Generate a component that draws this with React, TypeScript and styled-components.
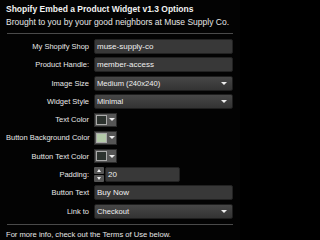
import React from "react";
import styled, { createGlobalStyle } from "styled-components";

const Global = createGlobalStyle`
  html, body { margin: 0; padding: 0; background: #000; }
  body { font-family: "Liberation Sans", Arial, sans-serif; }
`;

const Panel = styled.div`
  width: 240px;
  height: 240px;
  box-sizing: border-box;
  padding: 4px 7px 0 6px;
  background: #030303;
  color: #e4e4e4;
  font-size: 8.5px;
  overflow: hidden;
`;

const Title = styled.div`
  font-weight: bold;
  font-size: 8.5px;
  line-height: 11px;
  color: #f2f2f2;
`;

const Subtitle = styled.div`
  line-height: 11px;
  margin-top: 2px;
  color: #e6e6e6;
`;

const Divider = styled.div<{ $m: string }>`
  height: 0;
  border-top: 1px solid #4a4a4a;
  margin: ${(p) => p.$m};
  margin-left: 1px;
`;

const Form = styled.div`
  display: grid;
  grid-template-columns: 83px 1fr;
  column-gap: 5px;
  row-gap: 3.3px;
  align-items: center;
`;

const Label = styled.div`
  text-align: right;
  color: #e8e8e8;
  font-size: 7.5px;
  line-height: 15px;
  white-space: nowrap;
`;

const Field = styled.div<{ $w?: string }>`
  height: 15px;
  box-sizing: border-box;
  background: #383838;
  border: 1px solid #222;
  border-radius: 2px;
  padding: 0 2px;
  font-size: 8px;
  line-height: 13px;
  color: #f0f0f0;
  white-space: nowrap;
  overflow: hidden;
  width: ${(p) => p.$w || "auto"};
`;

const Select = styled.div`
  height: 15px;
  box-sizing: border-box;
  background: linear-gradient(#474747, #333);
  border: 1px solid #1e1e1e;
  border-radius: 2px;
  padding: 0 2px;
  display: flex;
  align-items: center;
  justify-content: space-between;
  font-size: 7.6px;
  color: #f0f0f0;
  white-space: nowrap;
`;

const Caret = styled.span<{ $mr?: number }>`
  width: 0;
  height: 0;
  border-left: 3px solid transparent;
  border-right: 3px solid transparent;
  border-top: 3px solid #eee;
  margin-right: ${(p) => (p.$mr ?? 3)}px;
`;

const ColorWrap = styled.div`
  display: flex;
  align-items: center;
  height: 14px;
  width: 23px;
  background: #555;
  border: 1px solid #2a2a2a;
  box-sizing: border-box;
`;

const Swatch = styled.div<{ $c: string }>`
  width: 11px;
  height: 10px;
  margin-left: 1px;
  box-sizing: border-box;
  border: 1px solid #aaa;
  background: ${(p) => p.$c};
`;

const SwatchArrow = styled.div`
  flex: 1;
  display: flex;
  justify-content: center;
  align-items: center;
`;

const SpinRow = styled.div`
  display: flex;
  align-items: center;
  gap: 1px;
`;

const Spinner = styled.div`
  width: 10px;
  height: 15px;
  display: flex;
  flex-direction: column;
  gap: 1px;
`;

const SpinBtn = styled.div<{ $up?: boolean }>`
  flex: 1;
  background: #555;
  border-radius: 1px;
  display: flex;
  align-items: center;
  justify-content: center;
  &::after {
    content: "";
    width: 0;
    height: 0;
    border-left: 2.5px solid transparent;
    border-right: 2.5px solid transparent;
    ${(p) => (p.$up ? "border-bottom: 3px solid #eee;" : "border-top: 3px solid #eee;")}
  }
`;

const Footer = styled.div`
  font-size: 7.6px;
  line-height: 11px;
  color: #e6e6e6;
`;

function ColorPicker({ color }: { color: string }) {
  return (
    <ColorWrap>
      <Swatch $c={color} />
      <SwatchArrow>
        <Caret $mr={0} />
      </SwatchArrow>
    </ColorWrap>
  );
}

export default function App() {
  return (
    <>
      <Global />
      <Panel>
        <Title>Shopify Embed a Product Widget v1.3 Options</Title>
        <Subtitle>Brought to you by your good neighbors at Muse Supply Co.</Subtitle>
        <Divider $m="5px 0 5px" />
        <Form>
          <Label>My Shopify Shop</Label>
          <Field>muse-supply-co</Field>
          <Label>Product Handle:</Label>
          <Field>member-access</Field>
          <Label>Image Size</Label>
          <Select>
            <span>Medium (240x240)</span>
            <Caret />
          </Select>
          <Label>Widget Style</Label>
          <Select>
            <span>Minimal</span>
            <Caret />
          </Select>
          <Label>Text Color</Label>
          <ColorPicker color="#2c322e" />
          <Label>Button Background Color</Label>
          <ColorPicker color="#b3c9a9" />
          <Label>Button Text Color</Label>
          <ColorPicker color="#2c322e" />
          <Label>Padding:</Label>
          <SpinRow>
            <Spinner>
              <SpinBtn $up />
              <SpinBtn />
            </Spinner>
            <Field $w="75px">20</Field>
          </SpinRow>
          <Label>Button Text</Label>
          <Field>Buy Now</Field>
          <Label>Link to</Label>
          <Select>
            <span>Checkout</span>
            <Caret />
          </Select>
        </Form>
        <Divider $m="5px 0 4px" />
        <Footer>For more info, check out the Terms of Use below.</Footer>
      </Panel>
    </>
  );
}
